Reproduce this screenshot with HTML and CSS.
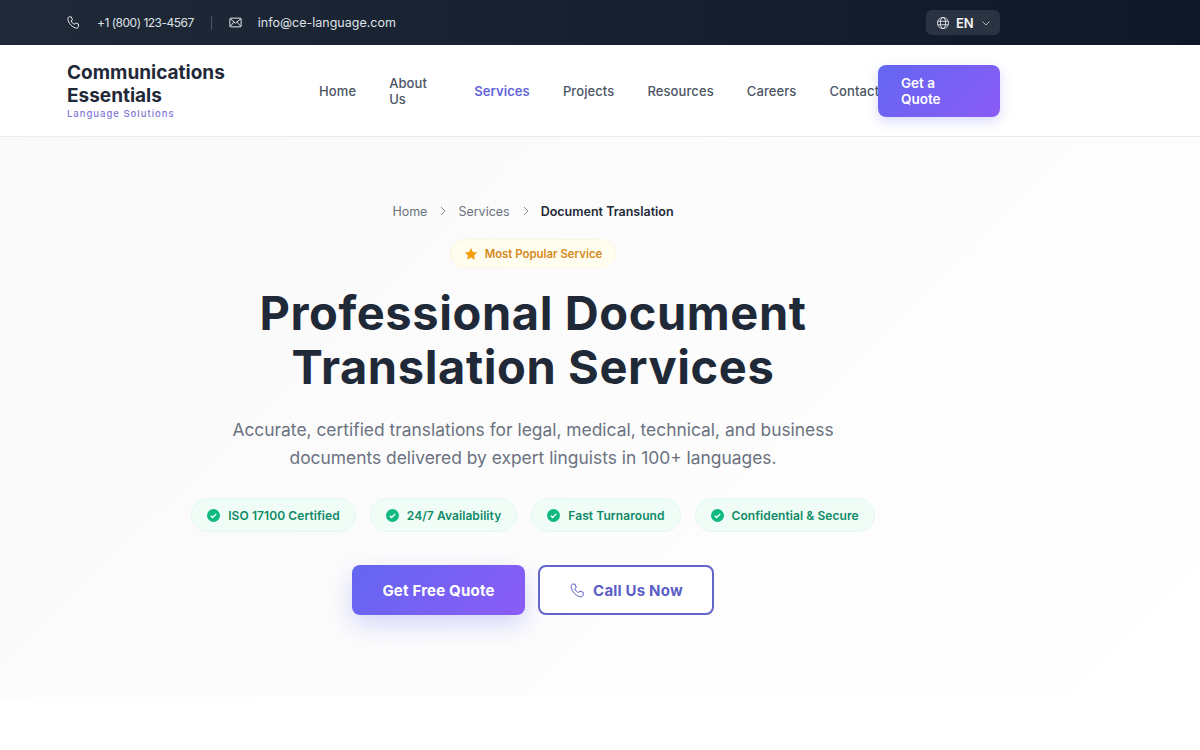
FILE: index.html
```html
<!DOCTYPE html>
<html lang="en">
<head>
    <meta charset="UTF-8">
    <meta name="viewport" content="width=device-width, initial-scale=1.0">
    <title>Document Translation - Communications Essentials</title>
    <link rel="stylesheet" href="styles.css">
</head>
<body>
    <!-- Top bar -->
    <div class="topbar">
        <div class="topbar-contact">
            <svg class="topbar-icon" viewBox="0 0 24 24"><path d="M5 3h3.5l1.800 4.800-2.300 1.700c1.100 2.500 3 4.400 5.500 5.500l1.700-2.300 4.800 1.800V18c0 1.700-1.300 3-3 3C10.500 20.500 3.500 13.500 3 6c0-1.700.9-3 2-3z"/></svg>
            <span class="topbar-phone">+1 (800) 123-4567</span>
            <span class="topbar-divider"></span>
            <svg class="topbar-icon" viewBox="0 0 24 24"><rect x="3" y="5" width="18" height="14" rx="1.5"/><path d="M3.5 6l8.500 7 8.500-7M3.500 18l6-6.500M20.500 18l-6-6.500"/></svg>
            <span class="topbar-email">info@ce-language.com</span>
        </div>
        <div class="lang">
            <svg class="lang-globe" viewBox="0 0 24 24"><circle cx="12" cy="12" r="9.5"/><ellipse cx="12" cy="12" rx="4.5" ry="9.5"/><path d="M3 9h18M3 15h18"/></svg>
            <span>EN</span>
            <svg class="lang-caret" viewBox="0 0 24 24"><path d="M5 9l7 7 7-7"/></svg>
        </div>
    </div>

    <!-- Main nav -->
    <header class="navbar">
        <div class="brand">
            <div class="brand-name">Communications Essentials</div>
            <div class="brand-tag">Language Solutions</div>
        </div>
        <nav class="nav-links">
            <a class="nav-home">Home</a>
            <a class="nav-about">About Us</a>
            <a class="nav-active">Services</a>
            <a>Projects</a>
            <a>Resources</a>
            <a>Careers</a>
            <a>Contact</a>
        </nav>
        <a class="nav-cta">Get a Quote</a>
    </header>

    <!-- Hero -->
    <section class="hero">
        <div class="breadcrumb">
            <span>Home</span>
            <svg class="crumb-sep" viewBox="0 0 24 24"><path d="M8 4l8 8-8 8"/></svg>
            <span>Services</span>
            <svg class="crumb-sep" viewBox="0 0 24 24"><path d="M8 4l8 8-8 8"/></svg>
            <span class="crumb-current">Document Translation</span>
        </div>
        <div class="badge">
            <svg class="badge-star" viewBox="0 0 24 24"><path d="M12 1.500l3.200 6.900 7.500.9-5.500 5.100 1.400 7.400L12 18.100l-6.600 3.700 1.400-7.400L1.300 9.300l7.500-.9z"/></svg>
            Most Popular Service
        </div>
        <h1>Professional Document<br>Translation Services</h1>
        <p class="lead">Accurate, certified translations for legal, medical, technical, and business documents delivered by expert linguists in 100+ languages.</p>
        <div class="features">
            <div class="feature"><svg class="check" viewBox="0 0 24 24"><circle cx="12" cy="12" r="12"/><path d="M7 12.500l3.400 3.300L17 9"/></svg>ISO 17100 Certified</div>
            <div class="feature"><svg class="check" viewBox="0 0 24 24"><circle cx="12" cy="12" r="12"/><path d="M7 12.500l3.400 3.300L17 9"/></svg>24/7 Availability</div>
            <div class="feature"><svg class="check" viewBox="0 0 24 24"><circle cx="12" cy="12" r="12"/><path d="M7 12.500l3.400 3.300L17 9"/></svg>Fast Turnaround</div>
            <div class="feature"><svg class="check" viewBox="0 0 24 24"><circle cx="12" cy="12" r="12"/><path d="M7 12.500l3.400 3.300L17 9"/></svg>Confidential &amp; Secure</div>
        </div>
        <div class="hero-actions">
            <a class="btn btn-primary">Get Free Quote</a>
            <a class="btn btn-outline">
                <svg class="btn-icon" viewBox="0 0 24 24"><path d="M5 3h3.5l1.800 4.800-2.300 1.700c1.100 2.500 3 4.400 5.500 5.500l1.700-2.300 4.800 1.800V18c0 1.700-1.300 3-3 3C10.500 20.500 3.500 13.500 3 6c0-1.700.9-3 2-3z"/></svg>
                Call Us Now
            </a>
        </div>
    </section>
</body>
</html>
```

FILE: styles.css
```css
/* General Styles */
* {
    box-sizing: border-box;
}

body {
    margin: 0;
    font-family: "Inter", "Noto Sans", sans-serif;
    background: #fff;
    color: #1f2937;
}

svg {
    flex-shrink: 0;
}

/* Top bar */
.topbar {
    height: 45px;
    padding: 0 200px 0 66px;
    display: flex;
    align-items: center;
    justify-content: space-between;
    background: linear-gradient(90deg, #1f2937, #0f172a);
    color: #dfe3e8;
    font-size: 12.5px;
}

.topbar-contact {
    display: flex;
    align-items: center;
}

.topbar-icon {
    width: 15px;
    height: 15px;
    fill: none;
    stroke: #f3f4f6;
    stroke-width: 1.5;
}

.topbar-phone {
    margin-left: 16px;
    font-size: 12px;
    letter-spacing: -0.5px;
    white-space: nowrap;
}

.topbar-email {
    margin-left: 15px;
}

.topbar-divider {
    width: 1px;
    height: 14px;
    margin: 0 16px 0 17px;
    background: #4b5563;
}

.lang {
    width: 74px;
    height: 25px;
    padding-left: 10px;
    display: flex;
    align-items: center;
    background: #2a3342;
    border-radius: 6px;
    color: #f3f4f6;
    font-size: 13px;
    font-weight: 600;
}

.lang-globe {
    width: 14px;
    height: 14px;
    margin-right: 6px;
    fill: none;
    stroke: #f3f4f6;
    stroke-width: 1.4;
}

.lang-caret {
    width: 12px;
    height: 12px;
    margin-left: 6px;
    fill: none;
    stroke: #cbd5e1;
    stroke-width: 1.6;
}

/* Main nav */
.navbar {
    height: 92px;
    padding: 0 200px 0 67px;
    display: flex;
    align-items: center;
    background: #fff;
    border-bottom: 1px solid #e9ebee;
}

.brand {
    width: 252px;
    flex-shrink: 0;
    padding-bottom: 2px;
}

.brand-name {
    width: 170px;
    font-size: 19px;
    font-weight: 700;
    line-height: 23px;
    color: #1f2937;
}

.brand-tag {
    margin-top: 1px;
    font-size: 9.5px;
    font-weight: 500;
    letter-spacing: 1px;
    color: #7f78d8;
}

.nav-links {
    width: 559px;
    flex-shrink: 0;
    display: flex;
    align-items: center;
    gap: 33px;
    font-size: 13px;
    font-weight: 500;
    letter-spacing: 0.1px;
    line-height: 16px;
    color: #4b5563;
}

.nav-home {
    width: 38px;
}

.nav-about {
    width: 52px;
    flex-shrink: 0;
}

.nav-active {
    color: #6366d8;
    font-weight: 600;
}

.nav-cta {
    position: relative;
    width: 122px;
    height: 52px;
    flex-shrink: 0;
    padding: 10px 50px 10px 23px;
    background: linear-gradient(135deg, #6366f1, #8b5cf6);
    border-radius: 8px;
    box-shadow: 0 4px 12px rgba(99, 102, 241, 0.25);
    color: #fff;
    font-size: 13.5px;
    font-weight: 600;
    line-height: 16px;
}

/* Hero */
.hero {
    height: 560px;
    padding: 64px 134px 0 0;
    display: flex;
    flex-direction: column;
    align-items: center;
    background: linear-gradient(135deg, #f9f9fa, #ffffff);
}

.breadcrumb {
    display: flex;
    align-items: center;
    height: 20px;
    font-size: 12.5px;
    color: #6b7280;
}

.crumb-sep {
    width: 12px;
    height: 12px;
    margin: 0 9px 0 10px;
    fill: none;
    stroke: #6b7280;
    stroke-width: 1.6;
}

.crumb-current {
    color: #1f2937;
    font-weight: 600;
}

.badge {
    height: 29px;
    margin-top: 18px;
    padding: 0 13px;
    display: flex;
    align-items: center;
    background: #fffcf0;
    border: 1px solid #fef7dc;
    border-radius: 15px;
    color: #d58a1c;
    font-size: 11.4px;
    font-weight: 600;
}

.badge-star {
    width: 14px;
    height: 14px;
    margin-right: 7px;
    fill: #f59e0b;
}

h1 {
    margin: 18px 0 0;
    font-size: 47px;
    font-weight: 700;
    letter-spacing: 0.6px;
    line-height: 54px;
    text-align: center;
    color: #1f2937;
}

.lead {
    width: 640px;
    margin: 22px 0 0;
    font-size: 17.4px;
    line-height: 28px;
    text-align: center;
    color: #6b7280;
}

.features {
    margin-top: 26px;
    display: flex;
    gap: 14px;
}

.feature {
    height: 34px;
    padding: 0 15px;
    display: flex;
    align-items: center;
    background: #f0fdf7;
    border: 1px solid #e3f9ef;
    border-radius: 17px;
    color: #0e8a66;
    font-size: 12px;
    font-weight: 600;
    letter-spacing: 0.08px;
}

.check {
    width: 13px;
    height: 13px;
    margin-right: 8px;
    fill: #10b981;
    stroke: none;
}

.check path {
    fill: none;
    stroke: #fff;
    stroke-width: 2.5;
}

.hero-actions {
    margin-top: 33px;
    display: flex;
    gap: 13px;
}

.btn {
    height: 50px;
    display: flex;
    align-items: center;
    justify-content: center;
    border-radius: 8px;
    font-size: 15px;
    font-weight: 700;
    letter-spacing: 0.2px;
}

.btn-primary {
    width: 173px;
    background: linear-gradient(135deg, #6366f1, #8b5cf6);
    box-shadow: 0 10px 24px rgba(99, 102, 241, 0.25);
    color: #fff;
}

.btn-outline {
    width: 176px;
    background: #fff;
    border: 2px solid #6366c9;
    color: #5b5fc7;
}

.btn-icon {
    width: 17px;
    height: 17px;
    margin-right: 7px;
    fill: none;
    stroke: #5b5fc7;
    stroke-width: 1.4;
}
```
